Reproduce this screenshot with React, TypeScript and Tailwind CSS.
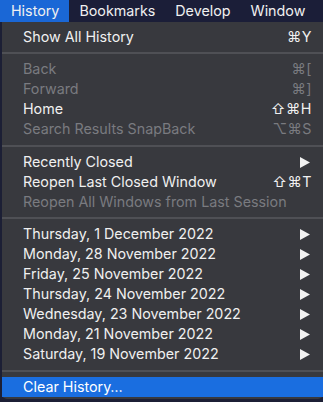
import { ReactNode } from 'react';

type Item =
  | { kind: 'sep' }
  | { kind: 'item'; label: string; shortcut?: string; submenu?: boolean; disabled?: boolean; active?: boolean };

const items: Item[] = [
  { kind: 'item', label: 'Show All History', shortcut: '⌘Y' },
  { kind: 'sep' },
  { kind: 'item', label: 'Back', shortcut: '⌘[', disabled: true },
  { kind: 'item', label: 'Forward', shortcut: '⌘]', disabled: true },
  { kind: 'item', label: 'Home', shortcut: '⇧⌘H' },
  { kind: 'item', label: 'Search Results SnapBack', shortcut: '⌥⌘S', disabled: true },
  { kind: 'sep' },
  { kind: 'item', label: 'Recently Closed', submenu: true },
  { kind: 'item', label: 'Reopen Last Closed Window', shortcut: '⇧⌘T' },
  { kind: 'item', label: 'Reopen All Windows from Last Session', disabled: true },
  { kind: 'sep' },
  { kind: 'item', label: 'Thursday, 1 December 2022', submenu: true },
  { kind: 'item', label: 'Monday, 28 November 2022', submenu: true },
  { kind: 'item', label: 'Friday, 25 November 2022', submenu: true },
  { kind: 'item', label: 'Thursday, 24 November 2022', submenu: true },
  { kind: 'item', label: 'Wednesday, 23 November 2022', submenu: true },
  { kind: 'item', label: 'Monday, 21 November 2022', submenu: true },
  { kind: 'item', label: 'Saturday, 19 November 2022', submenu: true },
  { kind: 'sep' },
  { kind: 'item', label: 'Clear History…', active: true },
];

const Arrow = () => (
  <svg width="10" height="11" viewBox="0 0 10 11" className="mr-[2px]">
    <polygon points="0,0 10,5.5 0,11" fill="#f2f2f2" />
  </svg>
);

const MenuRow = ({ children, className }: { children: ReactNode; className?: string }) => (
  <div className={`flex h-5 shrink-0 items-center justify-between pl-[21px] pr-[11px] ${className ?? ''}`}>{children}</div>
);

export default function App() {
  return (
    <div
      className="flex h-[402px] w-[323px] flex-col overflow-hidden bg-[#1c1f35] text-[14.3px] leading-none text-[#f0f0f0]"
      style={{ fontFamily: 'Inter, "DejaVu Sans", sans-serif' }}
    >
      <div className="flex h-[22px] shrink-0 items-center bg-[#1b1e38]">
        <div className="flex h-full items-center bg-[#1a67d6] pl-[11px] pr-[10px]">History</div>
        <div className="pl-[10px]">Bookmarks</div>
        <div className="pl-[20px]">Develop</div>
        <div className="pl-[20px]">Window</div>
      </div>
      <div className="ml-[2px] flex h-[377px] flex-col rounded-b-[5px] bg-[#38393e] pt-[5px]">
        {items.map((it, i) => {
          if (it.kind === 'sep') {
            return (
              <div key={i} className="flex h-[12.5px] shrink-0 items-center">
                <div className="h-[2px] w-full bg-[#4f5055]" />
              </div>
            );
          }
          return (
            <MenuRow
              key={i}
              className={`${it.disabled ? 'text-[#7a7b80]' : ''} ${it.active ? 'bg-[#1a6ee0] text-white' : ''}`}
            >
              <span>{it.label}</span>
              {it.shortcut && <span className="tracking-[0.5px]">{it.shortcut}</span>}
              {it.submenu && <Arrow />}
            </MenuRow>
          );
        })}
      </div>
    </div>
  );
}
